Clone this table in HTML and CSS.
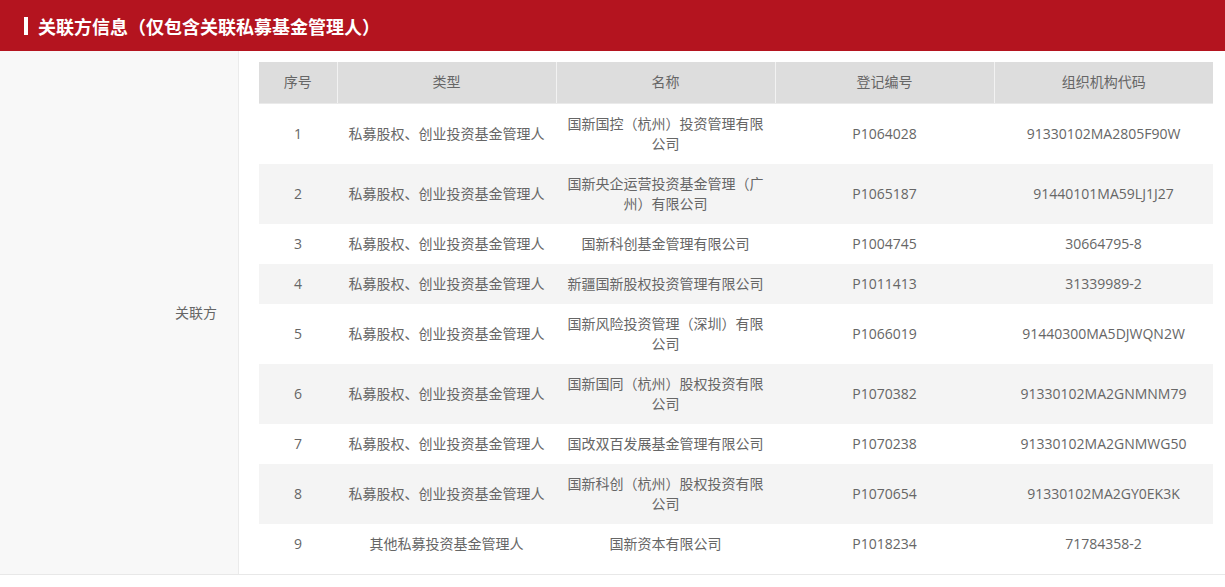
FILE: index.html
```html
<!DOCTYPE html>
<html lang="zh-CN">
<head>
<meta charset="utf-8">
<title>关联方信息</title>
<link rel="stylesheet" href="styles.css">
</head>
<body>
<div class="section">
  <div class="section-head">
    <span class="marker"></span>
    <h2 class="section-title">关联方信息（仅包含关联私募基金管理人）</h2>
  </div>
  <div class="section-body">
    <div class="label-cell">关联方</div>
    <div class="value-cell">
      <table class="grid">
        <colgroup>
          <col class="c-no"><col class="c-wide"><col class="c-wide"><col class="c-wide"><col class="c-wide">
        </colgroup>
        <thead>
          <tr><th>序号</th><th>类型</th><th>名称</th><th>登记编号</th><th>组织机构代码</th></tr>
        </thead>
        <tbody>
          <tr><td>1</td><td>私募股权、创业投资基金管理人</td><td>国新国控（杭州）投资管理有限公司</td><td>P1064028</td><td>91330102MA2805F90W</td></tr>
          <tr><td>2</td><td>私募股权、创业投资基金管理人</td><td>国新央企运营投资基金管理（广州）有限公司</td><td>P1065187</td><td>91440101MA59LJ1J27</td></tr>
          <tr><td>3</td><td>私募股权、创业投资基金管理人</td><td>国新科创基金管理有限公司</td><td>P1004745</td><td>30664795-8</td></tr>
          <tr><td>4</td><td>私募股权、创业投资基金管理人</td><td>新疆国新股权投资管理有限公司</td><td>P1011413</td><td>31339989-2</td></tr>
          <tr><td>5</td><td>私募股权、创业投资基金管理人</td><td>国新风险投资管理（深圳）有限公司</td><td>P1066019</td><td>91440300MA5DJWQN2W</td></tr>
          <tr><td>6</td><td>私募股权、创业投资基金管理人</td><td>国新国同（杭州）股权投资有限公司</td><td>P1070382</td><td>91330102MA2GNMNM79</td></tr>
          <tr><td>7</td><td>私募股权、创业投资基金管理人</td><td>国改双百发展基金管理有限公司</td><td>P1070238</td><td>91330102MA2GNMWG50</td></tr>
          <tr><td>8</td><td>私募股权、创业投资基金管理人</td><td>国新科创（杭州）股权投资有限公司</td><td>P1070654</td><td>91330102MA2GY0EK3K</td></tr>
          <tr><td>9</td><td>其他私募投资基金管理人</td><td>国新资本有限公司</td><td>P1018234</td><td>71784358-2</td></tr>
        </tbody>
      </table>
    </div>
  </div>
</div>
</body>
</html>
```

FILE: styles.css
```css
html, body {
  margin: 0;
  padding: 0;
  background: #ffffff;
}
body {
  font-family: "Open Sans", "Noto Sans CJK SC", sans-serif;
  color: #666666;
  font-size: 14px;
}
.section-head {
  height: 51px;
  background: #b4141f;
  display: flex;
  align-items: center;
  padding-left: 24px;
  box-sizing: border-box;
}
.marker {
  width: 4px;
  height: 18px;
  background: #ffffff;
  margin-right: 10px;
}
.section-title {
  margin: 0;
  color: #ffffff;
  font-family: "Noto Sans CJK SC", sans-serif;
  font-size: 18px;
  font-weight: bold;
  line-height: 24px;
}
.section-body {
  display: flex;
  border-bottom: 1px solid #e8e8e8;
}
.label-cell {
  width: 239px;
  flex: none;
  background: #f8f8f8;
  border-right: 1px solid #ebebeb;
  display: flex;
  align-items: center;
  justify-content: flex-end;
  padding-right: 21px;
  box-sizing: border-box;
  font-family: "Noto Sans CJK SC", sans-serif;
}
.value-cell {
  flex: 1;
  padding: 11px 12px 10px 20px;
}
.grid {
  width: 954px;
  table-layout: fixed;
  border-collapse: collapse;
}
.c-no { width: 78px; }
.c-wide { width: 219px; }
.grid th {
  background: #dddddd;
  font-weight: normal;
  color: #666666;
  height: 41px;
  padding: 0 0 1px;
  line-height: 20px;
  text-align: center;
  border-left: 1px solid #f2f2f2;
  border-bottom: 1px solid #eaeaea;
  box-sizing: border-box;
}
.grid th:first-child { border-left: none; }
.grid td {
  padding: 10px 10px;
  line-height: 20px;
  text-align: center;
  color: #666666;
}
.grid tbody tr:nth-child(even) td {
  background: #f4f4f4;
}
```
